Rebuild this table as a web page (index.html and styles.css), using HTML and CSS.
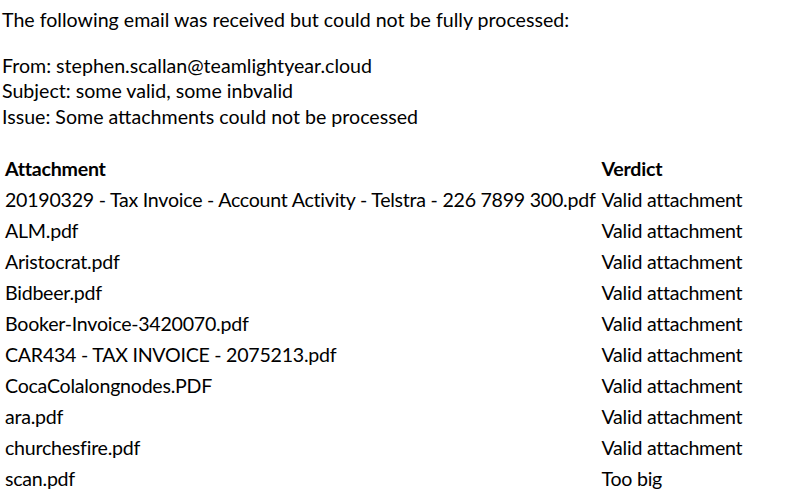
FILE: index.html
```html
<!DOCTYPE html>
<html>
<head>
<meta charset="utf-8">
<link rel="stylesheet" href="styles.css">
</head>
<body>
<div class="mail">
  <p class="intro">The following email was received but could not be fully processed:</p>
  <p class="meta">From: stephen.scallan@teamlightyear.cloud<br>Subject: some valid, some inbvalid<br>Issue: Some attachments could not be processed</p>
  <table class="results">
    <thead>
      <tr><th>Attachment</th><th>Verdict</th></tr>
    </thead>
    <tbody>
      <tr><td>20190329 - Tax Invoice - Account Activity - Telstra - 226 7899 300.pdf</td><td>Valid attachment</td></tr>
      <tr><td>ALM.pdf</td><td>Valid attachment</td></tr>
      <tr><td>Aristocrat.pdf</td><td>Valid attachment</td></tr>
      <tr><td>Bidbeer.pdf</td><td>Valid attachment</td></tr>
      <tr><td>Booker-Invoice-3420070.pdf</td><td>Valid attachment</td></tr>
      <tr><td>CAR434 - TAX INVOICE - 2075213.pdf</td><td>Valid attachment</td></tr>
      <tr><td>CocaColalongnodes.PDF</td><td>Valid attachment</td></tr>
      <tr><td>ara.pdf</td><td>Valid attachment</td></tr>
      <tr><td>churchesfire.pdf</td><td>Valid attachment</td></tr>
      <tr><td>scan.pdf</td><td>Too big</td></tr>
    </tbody>
  </table>
</div>
</body>
</html>
```
FILE: styles.css
```css
html, body {
  margin: 0;
  padding: 0;
  background: #ffffff;
}
.mail {
  padding: 7px 0 0 2px;
  font-family: Lato, "Liberation Sans", sans-serif;
  font-size: 19.6px;
  line-height: 25.5px;
  color: #000000;
}
.intro {
  margin: 0 0 20px 0;
}
.meta {
  margin: 0 0 24px 0;
}
.results {
  border-collapse: collapse;
  font-size: 19.6px;
  letter-spacing: -0.25px;
}
.results th {
  text-align: left;
  font-weight: bold;
  padding: 3px;
  line-height: 25px;
}
.results td {
  padding: 3px;
  line-height: 25px;
  white-space: nowrap;
}
```
